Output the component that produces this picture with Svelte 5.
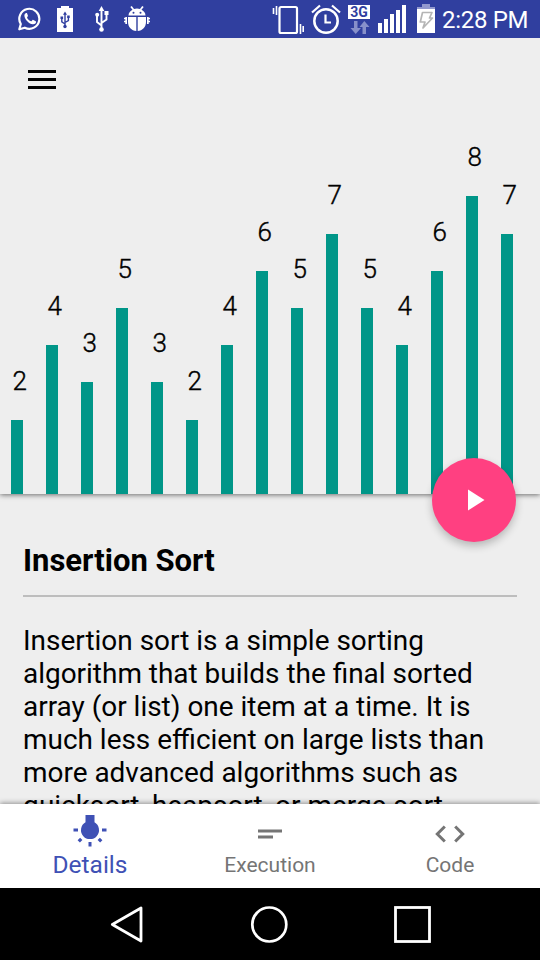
<script>
  const values = [2, 4, 3, 5, 3, 2, 4, 6, 5, 7, 5, 4, 6, 8, 7];
  const barHeight = (value) => Math.floor(value * 37.2 + 0.45);
  const lines = [
    'Insertion sort is a simple sorting',
    'algorithm that builds the final sorted',
    'array (or list) one item at a time. It is',
    'much less efficient on large lists than',
    'more advanced algorithms such as',
    'quicksort, heapsort, or merge sort.'
  ];
</script>

<div class="screen">
  <header class="status">
    <svg class="whatsapp" width="24" height="24" viewBox="0 0 24 24">
      <path d="M1.300 22.300 2.800 17A10 10 0 1 1 6.800 20.700Z" fill="none" stroke="#fff" stroke-width="2.200" stroke-linejoin="round" />
      <path d="M8 6C6.500 6.600 6 8.200 6.700 10.200c1.200 3.500 4.400 6.400 7.900 7.100 1.500.3 3.300-.6 3.500-2.200.1-.9-.2-1-2.800-2.200-.5-.2-.7 0-1.600 1.200-.3.400-.5.300-1.200 0-1.500-.7-2.600-1.900-3.300-3.200-.3-.5.200-.8.700-1.800.2-.3 0-.6-.2-1.200C9 6 9 5.900 8 6Z" fill="#fff" />
    </svg>
    <svg class="batt-usb" width="16" height="26" viewBox="0 0 16 26">
      <path d="M0 2h4V0h8v2h4v24H0Z" fill="#fff" />
      <path d="M8 8v12M8 18 4.800 15.800V12M8 16.500l3.400-2V10.500" stroke="#303f9f" stroke-width="1.400" fill="none" />
      <path d="m8 5.500 2 3.200H6ZM3.500 10.500h2.600V13H3.500ZM10.200 9.500h2.500V12h-2.500Z" fill="#303f9f" /><circle cx="8" cy="20.500" r="1.700" fill="#303f9f" />
    </svg>
    <svg class="usb" width="14" height="26" viewBox="0 0 14 26">
      <path d="M6.500 3v20M6.500 19.500 2 16V9M6.500 17 11.500 13.500V7" fill="none" stroke="#fff" stroke-width="1.900" />
      <path d="m6.500 0 2.800 5H3.700ZM9.500 5h4v4h-4Z" fill="#fff" /><circle cx="2.200" cy="8.700" r="2" fill="#fff" /><circle cx="6.500" cy="23.500" r="2.300" fill="#fff" />
    </svg>
    <svg class="bug" width="26" height="26" viewBox="0 0 26 26">
      <path d="M4.500 9.500C4.500 6.600 6.500 5 8.500 3.800L6.300 1l1.500-1 2.200 3a10 10 0 0 1 6 0l2.200-3 1.500 1-2.200 2.800C19.500 5 21.500 6.600 21.500 9.500ZM4 11h8.300v14C7.500 24.600 4 21 4 16ZM13.700 11H22v5c0 5-3.500 8.600-8.300 9ZM1.300 11H3v7H1.300ZM23 11h1.700v7H23ZM0 11.700h3v1.500H0ZM0 14.700h3v1.500H0ZM23 11.700h3v1.500h-3ZM23 14.700h3v1.500h-3Z" fill="#fff" />
      <circle cx="9.500" cy="6.700" r="1" fill="#303f9f" /><circle cx="16.500" cy="6.700" r="1" fill="#303f9f" />
    </svg>
    <svg class="vibrate" width="32" height="30" viewBox="0 0 32 30">
      <rect x="7.500" y="2" width="17.500" height="26" rx="1.500" fill="none" stroke="#fff" stroke-width="2.200" />
      <path d="M1.500 3v6M4.500 1v9M28.500 19v10M31.200 21v6" stroke="#fff" stroke-width="1.600" />
    </svg>
    <svg class="alarm" width="30" height="30" viewBox="0 0 30 30">
      <circle cx="15" cy="17" r="11.700" fill="none" stroke="#fff" stroke-width="2.500" />
      <path d="M14.500 10.500v8H20M1 8.500 9 1.500M21 1.500 29 8.500" fill="none" stroke="#fff" stroke-width="2.200" />
    </svg>
    <span class="mobile">
      <span class="badge">3G</span>
      <svg width="20" height="13" viewBox="0 0 20 13"><path d="M4 0h3.500v7H11L5.700 13 .5 7H4ZM12.500 13H16V6h3.500L14.300 0 9.500 6h3Z" fill="#8790ca" /></svg>
    </span>
    <svg class="signal" width="28" height="28" viewBox="0 0 28 28"><path d="M0 18h4v10H0ZM6 14h4v14H6ZM12 9h4v19h-4ZM18 5h4v23h-4ZM24 0h4v28h-4Z" fill="#fff" /></svg>
    <svg class="charge" width="18" height="29" viewBox="0 0 18 29">
      <path d="M0 3h5V0h8v3h5v2H0Z" fill="#9299ce" /><path d="M0 5h18v24H0Z" fill="#fff" />
      <path d="M5.500 8.500h9.500l-2.500 5.500h3L6 24l2-6H3.300Z" fill="none" stroke="#b5b5b5" stroke-width="1.700" stroke-linejoin="round" />
    </svg>
    <time>2:28 PM</time>
  </header>

  <section class="chart">
    <div class="bars">
      {#each values as value}
        <div class="col">
          <span>{value}</span>
          <div class="bar" style="height: {barHeight(value)}px"></div>
        </div>
      {/each}
    </div>
    <svg class="menu" width="28" height="19" viewBox="0 0 28 19"><path d="M0 0h28v3H0ZM0 8h28v3H0ZM0 16h28v3H0Z" /></svg>
    <button class="fab" aria-label="Play"><svg width="84" height="84" viewBox="0 0 84 84"><path d="m36 31.500 16.500 10.500L36 52.500Z" fill="#fff" /></svg></button>
  </section>

  <main>
    <h1>Insertion Sort</h1>
    <p>{#each lines as line}<span>{line}</span>{/each}</p>
  </main>

  <nav class="tabs">
    <div class="tab active">
      <svg width="36" height="36" viewBox="0 0 36 36"><path d="M13.500 1h9v7.300a9 9 0 1 1-9 0ZM1.500 14.500H6v3H1.500ZM30 14.500h4.500v3H30ZM16.500 28h3v4.500h-3ZM8.100 23.700l2.300 2.300-2.500 2.500-2.300-2.300ZM27.900 23.700l-2.300 2.300 2.500 2.500 2.300-2.300Z" fill="currentColor" /></svg>
      <span>Details</span>
    </div>
    <div class="tab">
      <svg width="36" height="36" viewBox="0 0 36 36"><path d="M6 13.500h24v3H6ZM6 19.500h15v3H6Z" fill="currentColor" /></svg>
      <span>Execution</span>
    </div>
    <div class="tab">
      <svg width="36" height="36" viewBox="0 0 36 36"><path d="M12.800 10.500 5.300 18l7.500 7.500M23.200 10.500 30.700 18l-7.500 7.500" fill="none" stroke="currentColor" stroke-width="3" /></svg>
      <span>Code</span>
    </div>
  </nav>

  <footer>
    <svg width="34" height="38" viewBox="0 0 34 38"><path d="M32 3v33L3.300 19.500Z" fill="none" stroke="#fff" stroke-width="2.800" stroke-linejoin="round" /></svg>
    <svg width="38" height="38" viewBox="0 0 38 38"><circle cx="19.300" cy="19.500" r="17" fill="none" stroke="#fff" stroke-width="2.700" /></svg>
    <svg width="38" height="38" viewBox="0 0 38 38"><rect x="2.500" y="2.500" width="34" height="34" fill="none" stroke="#fff" stroke-width="2.800" /></svg>
  </footer>
</div>

<style>
  :global(body) { margin: 0; overflow: hidden; }
  svg { display: block; flex: none; }
  .screen { width: 540px; height: 960px; display: flex; flex-direction: column; background: #eee; color: #000; font-family: Roboto, sans-serif; overflow: hidden; }
  .status { position: relative; z-index: 2; box-sizing: border-box; height: 38px; flex: none; display: flex; align-items: flex-start; background: #303f9f; color: #fff; }
  .whatsapp { margin: 7px 0 0 18px; }
  .batt-usb { margin: 6px 0 0 15px; }
  .usb { margin: 6px 0 0 22px; }
  .bug { margin: 6px 0 0 15px; }
  .vibrate { margin: 5px 0 0 122px; }
  .alarm { margin: 4px 0 0 7px; }
  .mobile { display: flex; flex-direction: column; width: 22px; margin: 5px 0 0 7px; }
  .badge { height: 14px; margin-bottom: 2px; background: #fff; color: #303f9f; font-size: 14px; line-height: 14px; font-weight: 700; text-align: center; }
  .mobile svg { margin-left: 2px; }
  .signal { margin: 5px 0 0 8px; }
  .charge { margin: 4px 0 0 11px; }
  time { margin-left: 7px; font-size: 24px; line-height: 40px; letter-spacing: -.3px; white-space: nowrap; }
  .chart { position: relative; z-index: 1; height: 456px; flex: none; box-shadow: 0 1px 5px rgba(0, 0, 0, .55); background: #eee; }
  .bars { height: 456px; display: flex; align-items: flex-end; gap: 23px; padding-left: 11px; }
  .col { width: 12px; display: flex; flex-direction: column; flex: none; }
  .col span { font-size: 26px; line-height: 26px; height: 52px; margin-left: 1.500px; font-weight: 300; -webkit-text-stroke: .4px #000; }
  .bar { background: #009688; }
  .menu { position: absolute; left: 28px; top: 32px; }
  .fab { position: absolute; left: 432px; top: 420px; width: 84px; height: 84px; padding: 0; border: 0; border-radius: 50%; background: #ff4081; box-shadow: 0 4px 9px rgba(0, 0, 0, .24); }
  main { height: 310px; flex: none; box-sizing: border-box; overflow: hidden; padding: 47px 23px 0; }
  h1 { margin: 0; height: 54px; border-bottom: 2px solid #bdbdbd; font-size: 31px; line-height: 40px; font-weight: 700; }
  p { margin: 27px 0 0; font-size: 27.940px; line-height: 33px; white-space: nowrap; }
  p span { display: block; }
  .tabs { position: relative; height: 84px; flex: none; display: flex; background: #fff; box-shadow: 0 -1px 5px rgba(0, 0, 0, .4); }
  .tab { flex: 1; display: flex; flex-direction: column; align-items: center; color: #757575; font-size: 21px; padding-top: 12px; }
  .tab span { line-height: 26px; }
  .active { color: #3f51b5; font-size: 24.500px; padding-top: 10px; }
  .active span { line-height: 30px; }
  footer { height: 72px; flex: none; box-sizing: border-box; display: flex; background: #000; padding: 17px 0 0 109px; }
  footer svg:nth-child(2) { margin-left: 107px; }
  footer svg:nth-child(3) { margin-left: 105px; }
</style>
